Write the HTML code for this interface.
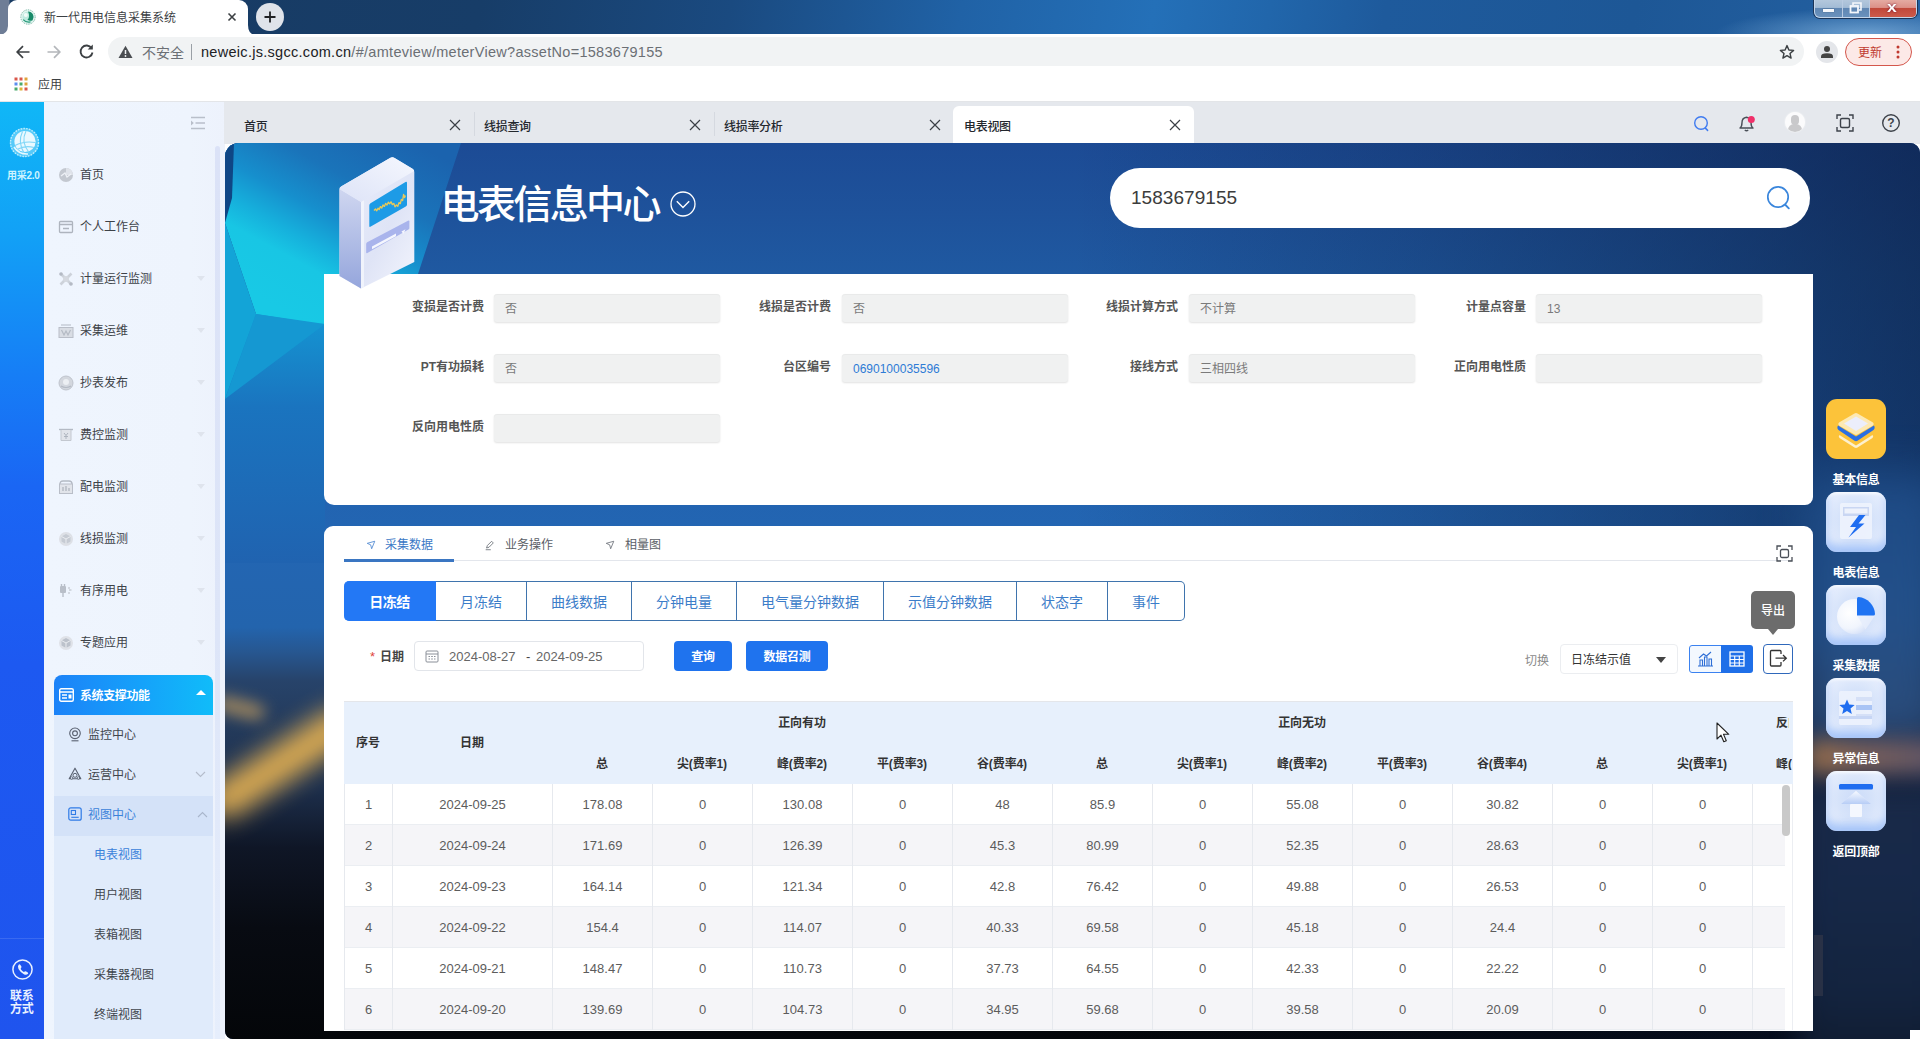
<!DOCTYPE html>
<html lang="zh-CN">
<head>
<meta charset="utf-8">
<title>新一代用电信息采集系统</title>
<style>
*{box-sizing:border-box;margin:0;padding:0}
html,body{width:1920px;height:1039px;overflow:hidden;background:#fff}
body{position:relative;font-family:"Liberation Sans","Noto Sans CJK SC",sans-serif;font-size:12px;color:#333;-webkit-font-smoothing:antialiased}
.abs{position:absolute}
.t{position:absolute;white-space:nowrap;line-height:1}
svg{position:absolute;overflow:visible}
/* browser chrome */
#tabstrip{left:0;top:0;width:1920px;height:35px;background:
 radial-gradient(ellipse 150px 26px at 1865px 34px,rgba(120,170,215,.85) 0%,rgba(120,170,215,0) 100%),
 linear-gradient(90deg,#6e7d96 0px,#6e7d96 9px,rgba(0,0,0,0) 10px),
 linear-gradient(100deg,#183a62 0%,#173d68 25%,#1a4a80 38%,#2062a6 50%,#2470b8 60%,#2166ab 66%,#1e5a9c 72%,#1d5796 85%,#2461a2 100%)}
#btab{left:8px;top:0;width:240px;height:35px;background:#fff;border-radius:9px 9px 0 0}
#toolbar{left:0;top:34px;width:1920px;height:34px;background:#fff}
#omni{left:108px;top:37px;width:1696px;height:29px;border-radius:15px;background:#f1f3f4}
#bookmarks{left:0;top:68px;width:1920px;height:34px;background:#fff;border-bottom:1px solid #e3e5e8}
</style>
</head>
<body>
<!-- ================= BROWSER CHROME ================= -->
<div class="abs" id="tabstrip"></div>
<div class="abs" id="btab"></div>
<svg style="left:0;top:25px" width="9" height="10"><path d="M0 10 Q7.5 9 8 1 L8 10 Z" fill="#fff"/></svg>
<svg style="left:248px;top:25px" width="8" height="10"><path d="M0 0 Q0 9 7 10 L0 10 Z" fill="#fff"/></svg>
<!-- favicon -->
<svg style="left:20px;top:9px" width="16" height="16" viewBox="0 0 16 16"><circle cx="8" cy="8" r="7.4" fill="#e3f5f0"/><circle cx="8" cy="8" r="7.2" fill="none" stroke="#7fb8a8" stroke-width="1" stroke-dasharray="1.3 1.1"/><circle cx="8" cy="8" r="5.6" fill="#bfeadf"/><path d="M8 2.4 A5.6 5.6 0 0 1 12.6 11.2 Q9.5 12.5 7.5 10.5 Q10.5 8 8 2.4 Z" fill="#178a68"/><path d="M3.2 10.6 Q6 13.8 10.5 12.9" stroke="#2a9b7c" stroke-width="1.3" fill="none"/><circle cx="5.8" cy="6" r="2" fill="#f2fbf8"/></svg>
<div class="t" style="left:44px;top:12px;font-size:12px;color:#3c4043;letter-spacing:0">新一代用电信息采集系统</div>
<svg style="left:227px;top:12px" width="10" height="10" viewBox="0 0 10 10"><path d="M1.5 1.5 L8.5 8.5 M8.5 1.5 L1.5 8.5" stroke="#3c4043" stroke-width="1.6"/></svg>
<div class="abs" style="left:256px;top:3px;width:28px;height:28px;border-radius:14px;background:#dfe3ea"></div>
<svg style="left:263px;top:10px" width="14" height="14" viewBox="0 0 14 14"><path d="M7 1.5 V12.5 M1.5 7 H12.5" stroke="#202124" stroke-width="1.8"/></svg>
<!-- window controls -->
<div class="abs" style="left:1814px;top:0;width:103px;height:18px;border:1px solid #c5d6ea;border-top:0;border-radius:0 0 6px 6px;box-shadow:0 0 0 1px #1b3558;background:linear-gradient(180deg,#b3c7dc 0%,#a3bcd6 44%,#5f86b2 46%,#6a92bd 100%)"></div>
<div class="abs" style="left:1842px;top:0;width:1px;height:17px;background:#b9cbe2"></div>
<div class="abs" style="left:1869px;top:0;width:1px;height:17px;background:#b9cbe2"></div>
<div class="abs" style="left:1870px;top:0;width:46px;height:17px;border-radius:0 0 4px 0;background:linear-gradient(180deg,#e4aaa2 0%,#dc9088 44%,#c0473a 47%,#cc5a4a 100%)"></div>
<div class="abs" style="left:1823px;top:9px;width:11px;height:3px;background:#f4f7fb;box-shadow:0 0 1px #234"></div>
<svg style="left:1849px;top:2px" width="13" height="12" viewBox="0 0 13 12"><path d="M4 3 V1 H12 V8 H10" fill="none" stroke="#f4f7fb" stroke-width="1.6"/><rect x="1.5" y="4" width="7.5" height="6.5" fill="none" stroke="#f4f7fb" stroke-width="1.8"/></svg>
<div class="t" style="left:1888px;top:0px;font-size:14px;font-weight:bold;color:#fff;transform:scaleX(1.25);text-shadow:0 0 2px #602">x</div>
<!-- toolbar -->
<div class="abs" id="toolbar"></div>
<svg style="left:15px;top:44px" width="16" height="16" viewBox="0 0 16 16"><path d="M14.5 8 H2.5 M8 2.2 L2.2 8 L8 13.8" fill="none" stroke="#3c4043" stroke-width="1.7"/></svg>
<svg style="left:46px;top:44px" width="16" height="16" viewBox="0 0 16 16"><path d="M1.5 8 H13.5 M8 2.2 L13.8 8 L8 13.8" fill="none" stroke="#b4b7bb" stroke-width="1.7"/></svg>
<svg style="left:78px;top:43px" width="17" height="17" viewBox="0 0 17 17"><path d="M13.6 5.2 A6 6 0 1 0 14.5 9.5" fill="none" stroke="#3c4043" stroke-width="1.8"/><path d="M14.8 1.5 V6.6 H9.7 Z" fill="#3c4043"/></svg>
<div class="abs" id="omni"></div>
<svg style="left:118px;top:45px" width="15" height="14" viewBox="0 0 15 14"><path d="M7.5 0.8 L14.5 13 H0.5 Z" fill="#4a4d51"/><path d="M7.5 5 V9" stroke="#f1f3f4" stroke-width="1.5"/><circle cx="7.5" cy="11" r=".9" fill="#f1f3f4"/></svg>
<div class="t" style="left:142px;top:46px;font-size:14px;color:#6b6f74">不安全</div>
<div class="abs" style="left:191px;top:44px;width:1px;height:16px;background:#9aa0a6"></div>
<div class="t" style="left:201px;top:45px;font-size:14.5px;color:#6b6f74;letter-spacing:.29px"><span style="color:#202124">neweic.js.sgcc.com.cn</span>/#/amteview/meterView?assetNo=1583679155</div>
<svg style="left:1779px;top:44px" width="16" height="16" viewBox="0 0 16 16"><path d="M8 1.6 L9.9 6 L14.6 6.4 L11 9.5 L12.1 14.1 L8 11.6 L3.9 14.1 L5 9.5 L1.4 6.4 L6.1 6 Z" fill="none" stroke="#3c4043" stroke-width="1.4" stroke-linejoin="round"/></svg>
<div class="abs" style="left:1816px;top:41px;width:22px;height:22px;border-radius:11px;background:#e4e6ea"></div>
<svg style="left:1820px;top:45px" width="14" height="14" viewBox="0 0 14 14"><circle cx="7" cy="4" r="3" fill="#444"/><path d="M1 13 V11.5 Q1 8.3 7 8.3 Q13 8.3 13 11.5 V13 Z" fill="#444"/></svg>
<div class="abs" style="left:1845px;top:38px;width:67px;height:28px;border-radius:14px;background:#fce9e7;border:1px solid #d4574c"></div>
<div class="t" style="left:1858px;top:47px;font-size:12px;color:#c0392f">更新</div>
<svg style="left:1896px;top:45px" width="4" height="14" viewBox="0 0 4 14"><circle cx="2" cy="2" r="1.5" fill="#c0392f"/><circle cx="2" cy="7" r="1.5" fill="#c0392f"/><circle cx="2" cy="12" r="1.5" fill="#c0392f"/></svg>
<!-- bookmarks -->
<div class="abs" id="bookmarks"></div>
<svg style="left:14px;top:77px" width="14" height="14" viewBox="0 0 14 14">
<rect x="0.5" y="0.5" width="3" height="3" fill="#d9574b"/><rect x="5.5" y="0.5" width="3" height="3" fill="#d9574b"/><rect x="10.5" y="0.5" width="3" height="3" fill="#e0a33a"/>
<rect x="0.5" y="5.5" width="3" height="3" fill="#5b8def"/><rect x="5.5" y="5.5" width="3" height="3" fill="#4aa96c"/><rect x="10.5" y="5.5" width="3" height="3" fill="#e0a33a"/>
<rect x="0.5" y="10.5" width="3" height="3" fill="#4aa96c"/><rect x="5.5" y="10.5" width="3" height="3" fill="#e0b23a"/><rect x="10.5" y="10.5" width="3" height="3" fill="#d9574b"/></svg>
<div class="t" style="left:38px;top:79px;font-size:12px;color:#3c4043">应用</div>
<!-- ================= APP LEFT STRIP ================= -->
<div class="abs" style="left:0;top:102px;width:44px;height:937px;background:linear-gradient(180deg,#10b7f7 0%,#12a1f6 14%,#167ef6 29%,#1a66f4 41%,#1d59f1 60%,#1f54ee 100%)"></div>
<svg style="left:9px;top:127px" width="31" height="31" viewBox="0 0 31 31"><circle cx="15.5" cy="15.5" r="14.6" fill="#9be3fb" opacity=".5"/><circle cx="15.5" cy="15.5" r="14" fill="none" stroke="#c9f1fd" stroke-width="1.4" stroke-dasharray="1.6 1.2" opacity=".9"/><circle cx="16" cy="14.5" r="10.6" fill="#f2fbff" opacity=".95"/><path d="M6 18.5 Q15 13.5 26.5 15.5 M8 22.5 Q16 18 25 20.5 M13.5 4.5 Q8.5 15 15 26 M17 4 Q11.5 15 20 25.5" stroke="#7fd6f7" stroke-width="1.1" fill="none"/><path d="M5 20 Q10 27.5 19 27" stroke="#e8f9ff" stroke-width="1.6" fill="none"/></svg>
<div class="t" style="left:7px;top:170.5px;font-size:10px;font-weight:bold;color:#cdf4ff;letter-spacing:-.3px">用采2.0</div>
<div class="abs" style="left:0;top:938px;width:44px;height:1px;background:rgba(255,255,255,.12)"></div>
<svg style="left:10.7px;top:957.6px" width="23" height="23" viewBox="0 0 23 23"><circle cx="11.5" cy="11.5" r="9.6" fill="none" stroke="#e9f1ff" stroke-width="1.5"/><path d="M7.6 6.8 Q8.6 5.8 9.4 6.9 L10.4 8.6 Q10.8 9.4 10 10 Q9.4 10.6 10 11.5 Q11 13 12.4 13.8 Q13.2 14.2 13.7 13.6 Q14.4 12.9 15.2 13.4 L16.8 14.5 Q17.7 15.2 16.8 16.1 Q15.4 17.4 13.2 16.4 Q9.6 14.6 7.5 10.9 Q6.4 8.4 7.6 6.8 Z" fill="#e9f1ff"/></svg>
<div class="t" style="left:10px;top:989.5px;font-size:12px;font-weight:bold;color:#e9f1ff;line-height:13.4px;letter-spacing:-.2px">联系<br>方式</div>
<!-- ================= SIDEBAR ================= -->
<div class="abs" style="left:44px;top:102px;width:181px;height:937px;background:linear-gradient(90deg,#eff5fe 0%,#eef4fd 80%,#edf2fc 100%)"></div>
<div class="abs" style="left:215px;top:146px;width:5px;height:893px;background:linear-gradient(180deg,#dbe2f7 0%,#dde5f8 55%,#e6eefc 100%);border-radius:3px 3px 0 0"></div>
<svg style="left:190px;top:116px" width="16" height="14" viewBox="0 0 16 14"><path d="M1 1.5 H15 M5.5 7 H15 M1 12.5 H15" stroke="#b9bfca" stroke-width="1.3"/><path d="M1 4.5 L3.8 7 L1 9.5 Z" fill="#b9bfca"/></svg>
<style>
.mi{position:absolute;left:80px;font-size:12px;color:#3d4248;line-height:1;white-space:nowrap}
.ma{position:absolute;left:197px;width:0;height:0;border-left:4.5px solid transparent;border-right:4.5px solid transparent;border-top:5px solid #dfe4ed}
.sm{position:absolute;font-size:12px;color:#40464d;line-height:1;white-space:nowrap}
</style>
<!-- menu icons -->
<svg style="left:58px;top:167px" width="16" height="16" viewBox="0 0 16 16"><circle cx="8" cy="8" r="7" fill="#c3c8d0"/><path d="M8 8 L8 1 A7 7 0 0 1 15 8 Z" fill="#dfe3ea"/><path d="M3 9 L7 6 L9 10 L13 7" stroke="#eef1f6" stroke-width="1.2" fill="none"/></svg>
<div class="mi" style="top:169px">首页</div>
<svg style="left:58px;top:219px" width="16" height="16" viewBox="0 0 16 16"><rect x="1.5" y="2.5" width="13" height="11" rx="1" fill="none" stroke="#aeb4be" stroke-width="1.3"/><path d="M1.5 5.5 H14.5 M5 9.5 H11" stroke="#aeb4be" stroke-width="1.3"/></svg>
<div class="mi" style="top:221px">个人工作台</div>
<svg style="left:58px;top:271px" width="16" height="16" viewBox="0 0 16 16"><path d="M2.5 2.5 L13.5 13.5 M13.5 2.5 L2.5 13.5" stroke="#cdd2da" stroke-width="2.6"/><circle cx="8" cy="8" r="3" fill="#d5d9e0"/><circle cx="3" cy="3" r="1.8" fill="#b4bac4"/><circle cx="13" cy="13" r="1.8" fill="#b4bac4"/></svg>
<div class="mi" style="top:273px">计量运行监测</div><div class="ma" style="top:276px"></div>
<svg style="left:58px;top:323px" width="16" height="16" viewBox="0 0 16 16"><rect x="1" y="4.5" width="14" height="10" fill="#d9dde4" stroke="#b9bec8" stroke-width="1"/><path d="M3 2 H13 M3.5 7 L6 12 L8 8 L10 12 L12.5 7" stroke="#b4bac4" stroke-width="1.2" fill="none"/></svg>
<div class="mi" style="top:325px">采集运维</div><div class="ma" style="top:328px"></div>
<svg style="left:58px;top:375px" width="16" height="16" viewBox="0 0 16 16"><circle cx="8" cy="8" r="7" fill="#d3d7de"/><circle cx="8" cy="8" r="7" fill="none" stroke="#bfc4cd" stroke-width="1"/><circle cx="8" cy="7" r="3" fill="#eceff3"/><path d="M3 11 Q8 14 13 11" stroke="#b4bac4" stroke-width="1.2" fill="none"/></svg>
<div class="mi" style="top:377px">抄表发布</div><div class="ma" style="top:380px"></div>
<svg style="left:58px;top:427px" width="16" height="16" viewBox="0 0 16 16"><path d="M1 2.5 H15" stroke="#b4bac4" stroke-width="1.4"/><path d="M3 3 V13.5 H13 V3" fill="#e1e4ea" stroke="#c3c8d0" stroke-width="1"/><path d="M6 6 L8 8.5 L10 6 M8 8.5 V12 M6 9.5 H10" stroke="#aeb4be" stroke-width="1" fill="none"/></svg>
<div class="mi" style="top:429px">费控监测</div><div class="ma" style="top:432px"></div>
<svg style="left:58px;top:479px" width="16" height="16" viewBox="0 0 16 16"><path d="M2 5 Q2 2 5 2 H11 Q14 2 14 5" fill="none" stroke="#b4bac4" stroke-width="1.3"/><rect x="1.5" y="5" width="13" height="9.5" fill="#e1e4ea" stroke="#b9bec8" stroke-width="1"/><path d="M5 8 V12 M8 7 V12 M11 9 V12" stroke="#aeb4be" stroke-width="1.3"/></svg>
<div class="mi" style="top:481px">配电监测</div><div class="ma" style="top:484px"></div>
<svg style="left:58px;top:531px" width="16" height="16" viewBox="0 0 16 16"><circle cx="8" cy="8" r="7" fill="#dde0e6"/><path d="M8 3 L12.5 5.5 V10.5 L8 13 L3.5 10.5 V5.5 Z" fill="#c6cbd3"/><path d="M8 8 L12.5 5.5 M8 8 V13 M8 8 L3.5 5.5" stroke="#eef0f4" stroke-width=".9"/></svg>
<div class="mi" style="top:533px">线损监测</div><div class="ma" style="top:536px"></div>
<svg style="left:58px;top:583px" width="16" height="16" viewBox="0 0 16 16"><rect x="2" y="3" width="6" height="7" rx="1" fill="#b9bfc9"/><path d="M3.5 1 V3 M6.5 1 V3 M5 10 V14" stroke="#b9bfc9" stroke-width="1.4"/><path d="M11 4 V6 M13.5 7 H11 M11 9 V11" stroke="#c9ced6" stroke-width="1.4"/></svg>
<div class="mi" style="top:585px">有序用电</div><div class="ma" style="top:588px"></div>
<svg style="left:58px;top:635px" width="16" height="16" viewBox="0 0 16 16"><circle cx="8" cy="8" r="7" fill="#dfe2e8"/><path d="M8 3 L12.5 5.5 V10.5 L8 13 L3.5 10.5 V5.5 Z" fill="#bcc2cb"/><path d="M8 8 L12.5 5.5 M8 8 V13 M8 8 L3.5 5.5" stroke="#eef0f4" stroke-width=".9"/></svg>
<div class="mi" style="top:637px">专题应用</div><div class="ma" style="top:640px"></div>
<!-- active group -->
<div class="abs" style="left:54px;top:715px;width:159px;height:324px;background:#e0ebfb"></div>
<div class="abs" style="left:54px;top:675px;width:159px;height:40px;border-radius:8px 8px 0 0;background:linear-gradient(90deg,#1c82f8 0%,#15a2fa 55%,#10bcf9 100%)"></div>
<svg style="left:59px;top:688px" width="15" height="14" viewBox="0 0 15 14"><rect x=".7" y=".7" width="13.6" height="12.6" rx="1.5" fill="none" stroke="#fff" stroke-width="1.4"/><path d="M.7 4 H14.3 M3 7 H8 M3 10 H8" stroke="#fff" stroke-width="1.4"/><rect x="9.5" y="6.5" width="3" height="4" fill="#fff"/></svg>
<div class="t" style="left:80px;top:690px;font-size:12px;font-weight:bold;color:#fff;letter-spacing:-.4px">系统支撑功能</div>
<div class="abs" style="left:196px;top:690px;width:0;height:0;border-left:5px solid transparent;border-right:5px solid transparent;border-bottom:5.5px solid #fff"></div>
<svg style="left:68px;top:727px" width="14" height="15" viewBox="0 0 14 15"><circle cx="7" cy="6.3" r="5.3" fill="none" stroke="#596170" stroke-width="1.1"/><circle cx="7" cy="6.3" r="2.4" fill="none" stroke="#596170" stroke-width="1.1"/><path d="M3.5 13.8 H10.5" stroke="#596170" stroke-width="1.1"/></svg>
<div class="sm" style="left:88px;top:729px">监控中心</div>
<svg style="left:68px;top:767px" width="14" height="14" viewBox="0 0 14 14"><path d="M7 1.2 L12.8 11.8 H1.2 Z" fill="none" stroke="#596170" stroke-width="1.1" stroke-linejoin="round"/><circle cx="7" cy="8.3" r="2" fill="none" stroke="#596170" stroke-width="1"/><circle cx="3.6" cy="11" r="1.3" fill="#e0ebfb" stroke="#596170" stroke-width=".9"/><circle cx="10.4" cy="11" r="1.3" fill="#e0ebfb" stroke="#596170" stroke-width=".9"/></svg>
<div class="sm" style="left:88px;top:769px">运营中心</div>
<svg style="left:195px;top:771px" width="11" height="7" viewBox="0 0 11 7"><path d="M1 1 L5.5 5.5 L10 1" fill="none" stroke="#b4bccb" stroke-width="1.1"/></svg>
<div class="abs" style="left:54px;top:796px;width:159px;height:40px;background:#d4e2f8"></div>
<svg style="left:68px;top:807px" width="14" height="14" viewBox="0 0 14 14"><rect x=".8" y=".8" width="12.4" height="12.4" rx="2" fill="none" stroke="#2f7be6" stroke-width="1.2"/><rect x="3.3" y="3.5" width="4.2" height="4" fill="none" stroke="#2f7be6" stroke-width="1.1"/><path d="M3.3 10.3 H10.7" stroke="#2f7be6" stroke-width="1.1"/></svg>
<div class="sm" style="left:88px;top:809px;color:#3b82da">视图中心</div>
<svg style="left:197px;top:811px" width="11" height="7" viewBox="0 0 11 7"><path d="M1 6 L5.5 1.5 L10 6" fill="none" stroke="#a9b6cc" stroke-width="1.1"/></svg>
<div class="sm" style="left:94px;top:849px;color:#3b82da">电表视图</div>
<div class="sm" style="left:94px;top:889px">用户视图</div>
<div class="sm" style="left:94px;top:929px">表箱视图</div>
<div class="sm" style="left:94px;top:969px">采集器视图</div>
<div class="sm" style="left:94px;top:1009px">终端视图</div>
<!-- ================= APP TAB BAR ================= -->
<div class="abs" style="left:224px;top:102px;width:1696px;height:42px;background:#e5e8ed"></div>
<div class="abs" style="left:953px;top:106px;width:241px;height:38px;background:#fff;border-radius:6px 6px 0 0"></div>
<style>.tb{position:absolute;top:121px;font-size:12px;font-weight:500;color:#23272d;line-height:1;white-space:nowrap;letter-spacing:-.3px}</style>
<div class="tb" style="left:244px">首页</div>
<div class="tb" style="left:484px">线损查询</div>
<div class="tb" style="left:724px">线损率分析</div>
<div class="tb" style="left:964px">电表视图</div>
<svg style="left:449px;top:119px" width="12" height="12" viewBox="0 0 12 12"><path d="M1 1 L11 11 M11 1 L1 11" stroke="#3a3f46" stroke-width="1.2"/></svg>
<svg style="left:689px;top:119px" width="12" height="12" viewBox="0 0 12 12"><path d="M1 1 L11 11 M11 1 L1 11" stroke="#3a3f46" stroke-width="1.2"/></svg>
<svg style="left:929px;top:119px" width="12" height="12" viewBox="0 0 12 12"><path d="M1 1 L11 11 M11 1 L1 11" stroke="#3a3f46" stroke-width="1.2"/></svg>
<svg style="left:1169px;top:119px" width="12" height="12" viewBox="0 0 12 12"><path d="M1 1 L11 11 M11 1 L1 11" stroke="#3a3f46" stroke-width="1.2"/></svg>
<div class="abs" style="left:474px;top:112px;width:1px;height:24px;background:#d5d9e0"></div>
<div class="abs" style="left:714px;top:112px;width:1px;height:24px;background:#d5d9e0"></div>
<!-- right icons -->
<svg style="left:1693px;top:115px" width="17" height="17" viewBox="0 0 17 17"><circle cx="8" cy="8" r="6.3" fill="none" stroke="#3f7bf0" stroke-width="1.4"/><path d="M12.6 13.4 L14.6 15.4" stroke="#3f7bf0" stroke-width="1.5" stroke-linecap="round"/></svg>
<svg style="left:1737px;top:113px" width="20" height="20" viewBox="0 0 20 20"><path d="M3 15 Q5 13.5 5 9.5 Q5 4.8 9.5 4.2 Q14 4.8 14 9.5 Q14 13.5 16 15 Z" fill="none" stroke="#4a4f57" stroke-width="1.4" stroke-linejoin="round"/><path d="M7.8 17 Q9.5 18.6 11.2 17" fill="none" stroke="#4a4f57" stroke-width="1.4"/><circle cx="14.3" cy="6.6" r="3.5" fill="#f0306a"/></svg>
<div class="abs" style="left:1785px;top:112px;width:20px;height:20px;border-radius:10px;background:#fbfbfc;overflow:hidden;box-shadow:0 0 2px rgba(255,255,255,.9)"><div class="abs" style="left:6px;top:2.5px;width:8px;height:10px;border-radius:4px;background:#c9c9cb"></div><div class="abs" style="left:3px;top:12px;width:14px;height:12px;border-radius:6px 6px 0 0;background:#c9c9cb"></div></div>
<svg style="left:1836px;top:114px" width="18" height="18" viewBox="0 0 18 18"><path d="M1 5 V1 H5 M13 1 H17 V5 M17 13 V17 H13 M5 17 H1 V13" fill="none" stroke="#3d424a" stroke-width="1.4"/><rect x="4.5" y="4.5" width="9" height="9" rx="1.5" fill="none" stroke="#3d424a" stroke-width="1.4"/></svg>
<svg style="left:1881px;top:113px" width="20" height="20" viewBox="0 0 20 20"><circle cx="10" cy="10" r="8.3" fill="none" stroke="#3d424a" stroke-width="1.4"/><text x="10" y="14.2" text-anchor="middle" font-family="Liberation Sans,sans-serif" font-weight="bold" font-size="12" fill="#3d424a">?</text></svg>
<!-- ================= MAIN BACKGROUND ================= -->
<div class="abs" id="main" style="left:225px;top:143px;width:1695px;height:896px;border-radius:14px 10px 0 8px;overflow:hidden;background:#17366a">
 <div class="abs" style="left:0;top:0;width:1695px;height:896px;background:
  linear-gradient(90deg,rgba(8,20,50,0) 0%,rgba(8,20,50,0) 50%,rgba(8,20,50,.2) 70%,rgba(8,20,50,.42) 88%,rgba(8,20,50,.58) 100%),
  linear-gradient(180deg,#1c4b95 0px,#1e529b 70px,#1f59a1 130px,#2161ae 300px,#2366b3 400px,#2364ad 484px,#27568f 510px,#27436a 538px,#243b5c 580px,#1d2f4c 645px,#0f1626 705px,#080b12 785px,#040609 896px)"></div>
 <!-- left teal polygons -->
 <svg style="left:0;top:0" width="330" height="520" viewBox="0 0 330 520">
  <defs>
   <linearGradient id="gTop" gradientUnits="userSpaceOnUse" x1="190" y1="0" x2="90" y2="185"><stop offset="0" stop-color="#1b63ae"/><stop offset=".3" stop-color="#1a74ba"/><stop offset=".5" stop-color="#168fcd"/><stop offset=".65" stop-color="#16b0dc"/><stop offset=".76" stop-color="#18c6e4"/><stop offset="1" stop-color="#18c9e5"/></linearGradient>
   <linearGradient id="gLow" gradientUnits="userSpaceOnUse" x1="0" y1="180" x2="0" y2="420"><stop offset="0" stop-color="#1593d1"/><stop offset=".35" stop-color="#1a74bf"/><stop offset="1" stop-color="#2063b0"/></linearGradient>
  </defs>
  <polygon points="0,170 100,170 100,420 0,420" fill="url(#gLow)"/>
  <polygon points="0,0 236,0 193,131 100,131 100,182 31,171 0,80" fill="url(#gTop)"/>
  <polygon points="0,80 31,171 0,256" fill="#13a4d7"/>
  <polygon points="31,171 100,181 0,256" fill="#1598d2"/>
  <polygon points="0,0 9,0 7,55 0,80" fill="#0f4685"/>
 </svg>
 <!-- night lights lower-left -->
 <div class="abs" style="left:-28px;top:601px;width:170px;height:38px;background:#e0ae52;filter:blur(12px);opacity:.95;transform:rotate(-33deg);border-radius:20px"></div>
 <div class="abs" style="left:-10px;top:558px;width:50px;height:14px;background:#cfa35e;filter:blur(8px);opacity:.8;transform:rotate(14deg);border-radius:10px"></div>
 <!-- right sunset glow -->
 <div class="abs" style="left:1580px;top:330px;width:140px;height:270px;background:linear-gradient(180deg,#1e4b86 0%,#24528c 50%,#2d4d7a 100%);filter:blur(22px);opacity:.95"></div>
 <div class="abs" style="left:1575px;top:645px;width:150px;height:280px;background:linear-gradient(180deg,#1a2a48 0%,#17294a 35%,#14243f 75%,#101b2e 100%);filter:blur(14px);opacity:.97"></div>
 <div class="abs" style="left:1582px;top:597px;width:135px;height:34px;background:linear-gradient(90deg,#a87648 0%,#86665a 35%,#66596a 100%);filter:blur(11px);opacity:.95"></div>
</div>
<!-- ================= HEADER ================= -->
<div class="t" style="left:440.5px;top:185px;font-size:39px;font-weight:500;color:#fff;letter-spacing:-2.6px">电表信息中心</div>
<svg style="left:669.6px;top:191.3px" width="26" height="26" viewBox="0 0 26 26"><circle cx="13" cy="13" r="12" fill="none" stroke="#fff" stroke-width="1.3"/><path d="M6.8 10.2 L13 16.4 L19.2 10.2" fill="none" stroke="#fff" stroke-width="1.4"/></svg>
<div class="abs" style="left:1110px;top:168px;width:700px;height:60px;border-radius:30px;background:#fff"></div>
<div class="t" style="left:1131px;top:188px;font-size:19px;color:#3c3c3c;letter-spacing:.05px">1583679155</div>
<svg style="left:1765px;top:184px" width="28" height="28" viewBox="0 0 28 28"><circle cx="13" cy="13" r="10.2" fill="none" stroke="#3a86dc" stroke-width="1.7"/><path d="M20.5 21 L23.8 24.3" stroke="#3a86dc" stroke-width="1.9" stroke-linecap="round"/></svg>
<!-- ================= INFO CARD ================= -->
<div class="abs" style="left:324px;top:274px;width:1489px;height:231px;background:#fff;border-radius:0 0 8px 10px"></div>
<style>
.fl{position:absolute;font-size:12px;font-weight:bold;color:#555;line-height:1;white-space:nowrap;text-align:right;width:160px;letter-spacing:0}
.fi{position:absolute;width:226px;height:28px;background:#f0f1f1;border-radius:3px;box-shadow:0 1px 2px rgba(0,0,0,.12), inset 0 1px 1px rgba(0,0,0,.03);font-size:12px;color:#7a7a7a;line-height:30px;padding-left:11px;white-space:nowrap}
</style>
<div class="fl" style="left:324px;top:301px">变损是否计费</div><div class="fi" style="left:494px;top:294px">否</div>
<div class="fl" style="left:671px;top:301px">线损是否计费</div><div class="fi" style="left:842px;top:294px">否</div>
<div class="fl" style="left:1018px;top:301px">线损计算方式</div><div class="fi" style="left:1189px;top:294px">不计算</div>
<div class="fl" style="left:1366px;top:301px">计量点容量</div><div class="fi" style="left:1536px;top:294px">13</div>
<div class="fl" style="left:324px;top:361px">PT有功损耗</div><div class="fi" style="left:494px;top:354px">否</div>
<div class="fl" style="left:671px;top:361px">台区编号</div><div class="fi" style="left:842px;top:354px;color:#2e7bd6">0690100035596</div>
<div class="fl" style="left:1018px;top:361px">接线方式</div><div class="fi" style="left:1189px;top:354px">三相四线</div>
<div class="fl" style="left:1366px;top:361px">正向用电性质</div><div class="fi" style="left:1536px;top:354px"></div>
<div class="fl" style="left:324px;top:421px">反向用电性质</div><div class="fi" style="left:494px;top:414px"></div>
<!-- meter illustration -->
<svg style="left:330px;top:150px" width="100" height="150" viewBox="330 150 100 150">
 <defs>
  <linearGradient id="mF" x1="0" y1="0" x2="1" y2="1"><stop offset="0" stop-color="#e9edfb"/><stop offset=".6" stop-color="#dfe4f6"/><stop offset="1" stop-color="#f3f5fd"/></linearGradient>
  <linearGradient id="mL" x1="0" y1="0" x2="0" y2="1"><stop offset="0" stop-color="#cfd6f0"/><stop offset="1" stop-color="#95a6dc"/></linearGradient>
  <linearGradient id="mT" x1="0" y1="1" x2="1" y2="0"><stop offset="0" stop-color="#dde3f7"/><stop offset="1" stop-color="#f5f7fe"/></linearGradient>
 </defs>
 <path d="M339.5 190 Q339.3 187.5 341.5 186.3 L390 158 Q392.4 156.7 394.6 158 L412.5 168.8 Q414.3 170 414.3 172 L414.3 262 L361 288.5 L339.5 276 Z" fill="url(#mF)"/>
 <path d="M339.5 189 L361 202 L361 288.5 L339.5 276 Z" fill="url(#mL)"/>
 <path d="M339.5 189 Q339.3 187.3 341.5 186.3 L390 158 Q392.4 156.7 394.6 158 L412.5 168.8 Q414 169.8 414.2 171 L361 202 Z" fill="url(#mT)"/>
 <path d="M361 202 L364 200.3 L364 287 L361 288.5 Z" fill="#f4f6fd" opacity=".8"/>
 <path d="M369.3 205.5 Q369.3 204 370.5 203.3 L405.5 182 Q407 181.2 407 183 L407 204.5 Q407 205.8 405.8 206.5 L370.8 226.6 Q369.3 227.4 369.3 226 Z" fill="#1d9be6"/>
 <path d="M374 210.5 L375.5 209 L376.8 210.8 L378 208.2 L379.2 209.6 L380.4 206.6 L381.8 208 L383 205 L384.4 206.4 L385.6 203.4 L387 205 L388.3 202.2 L389.6 203.8 L391 201.8 L392.4 204.6 L393.8 203.4 L395 206.8 L396.4 205 L397.8 206.2 L399 202.6 L400.3 203.6 L401.4 199.4 L402.6 200.6 L403.6 194.4 L404.6 197.6 L405.4 195.6" fill="none" stroke="#e8c95a" stroke-width="1.35" stroke-linejoin="round"/>
 <path d="M366.2 244 Q366.2 242.8 367.2 242.2 L408 220.8 Q409.4 220.2 409.4 221.5 L409.4 228 Q409.4 229 408.4 229.6 L367.4 253 Q366.2 253.6 366.2 252.4 Z" fill="#a9b4ec"/>
 <path d="M372 246.5 L396 233.5 L396 236.2 L372 249.2 Z" fill="#f4f6fe"/>
 <path d="M401.5 231.5 L405.5 229.3 L403.5 234 Z" fill="#f4f6fe"/>
</svg>
<!-- ================= DATA CARD ================= -->
<div class="abs" style="left:324px;top:526px;width:1489px;height:505px;background:#fff;border-radius:9px 9px 0 0"></div>
<div class="abs" style="left:344px;top:559.7px;width:1449px;height:1.6px;background:#e3e6ec"></div>
<div class="abs" style="left:344px;top:559.4px;width:110px;height:2.6px;background:#3a76c2"></div>
<svg style="left:365.5px;top:540px" width="10" height="10" viewBox="0 0 12 12"><path d="M1.5 4 L10.5 1.5 L6.8 10.5 L5.6 5.8 Z" fill="none" stroke="#4b86d0" stroke-width="1" stroke-linejoin="round"/></svg>
<div class="t" style="left:385px;top:539px;font-size:12px;color:#3a78c6">采集数据</div>
<svg style="left:484px;top:539.5px" width="11" height="11" viewBox="0 0 13 13"><path d="M3 9.5 L4 6.5 L9 1.5 L11 3.5 L6 8.5 Z M2 11.5 H8" fill="none" stroke="#6a6f77" stroke-width="1" stroke-linejoin="round"/></svg>
<div class="t" style="left:505px;top:539px;font-size:12px;color:#5a5e66">业务操作</div>
<svg style="left:604.5px;top:540px" width="10" height="10" viewBox="0 0 12 12"><path d="M1.5 4 L10.5 1.5 L6.8 10.5 L5.6 5.8 Z" fill="none" stroke="#6a6f77" stroke-width="1" stroke-linejoin="round"/></svg>
<div class="t" style="left:625px;top:539px;font-size:12px;color:#5a5e66">相量图</div>
<svg style="left:1776px;top:545px" width="17" height="17" viewBox="0 0 17 17"><path d="M1 5 V1 H5 M12 1 H16 V5 M16 12 V16 H12 M5 16 H1 V12" fill="none" stroke="#4a4f57" stroke-width="1.3"/><rect x="4.5" y="4.5" width="8" height="8" rx="1.5" fill="none" stroke="#4a4f57" stroke-width="1.3"/></svg>
<!-- button group -->
<style>.bg{position:absolute;top:581px;height:40px;border:1px solid #3f74ad;border-left:0;background:#fff;font-size:14px;color:#3c7dc9;text-align:center;line-height:40px;white-space:nowrap}</style>
<div class="bg" style="left:344px;width:92px;background:#2378f5;border-color:#2378f5;color:#fff;font-weight:bold;border-radius:5px 0 0 5px;letter-spacing:-.5px">日冻结</div>
<div class="bg" style="left:436px;width:91px">月冻结</div>
<div class="bg" style="left:527px;width:105px">曲线数据</div>
<div class="bg" style="left:632px;width:105px">分钟电量</div>
<div class="bg" style="left:737px;width:147px">电气量分钟数据</div>
<div class="bg" style="left:884px;width:133px">示值分钟数据</div>
<div class="bg" style="left:1017px;width:91px">状态字</div>
<div class="bg" style="left:1108px;width:77px;border-radius:0 5px 5px 0">事件</div>
<!-- date row -->
<div class="t" style="left:370px;top:650px;font-size:13px;color:#e0453a">*</div>
<div class="t" style="left:380px;top:651px;font-size:12px;font-weight:bold;color:#444">日期</div>
<div class="abs" style="left:414px;top:641px;width:230px;height:30px;border:1px solid #e2e5ea;border-radius:4px;background:#fff"></div>
<svg style="left:425px;top:649px" width="14" height="14" viewBox="0 0 14 14"><rect x="1" y="2" width="12" height="11" rx="1" fill="none" stroke="#8a8f98" stroke-width="1"/><path d="M1 5 H13 M3.5 7.5 H5 M6.2 7.5 H7.8 M9 7.5 H10.5 M3.5 10 H5 M6.2 10 H7.8 M9 10 H10.5" stroke="#8a8f98" stroke-width="1"/></svg>
<div class="t" style="left:449px;top:650px;font-size:13px;color:#666">2024-08-27</div>
<div class="t" style="left:526px;top:650px;font-size:13px;color:#444">-</div>
<div class="t" style="left:536px;top:650px;font-size:13px;color:#666">2024-09-25</div>
<div class="abs" style="left:674px;top:641px;width:58px;height:30px;border-radius:4px;background:#1f73ee;color:#fff;font-size:12px;font-weight:bold;text-align:center;line-height:32px;letter-spacing:-.3px">查询</div>
<div class="abs" style="left:746px;top:641px;width:82px;height:30px;border-radius:4px;background:#1f73ee;color:#fff;font-size:12px;font-weight:bold;text-align:center;line-height:32px;letter-spacing:-.3px">数据召测</div>
<!-- right controls -->
<div class="t" style="left:1525px;top:655px;font-size:12px;color:#8a8a8a">切换</div>
<div class="abs" style="left:1560px;top:644px;width:118px;height:30px;border:1px solid #ebedf0;border-radius:4px;background:#fff"></div>
<div class="t" style="left:1571px;top:654px;font-size:12px;color:#333">日冻结示值</div>
<div class="abs" style="left:1656px;top:657px;width:0;height:0;border-left:5px solid transparent;border-right:5px solid transparent;border-top:6px solid #444"></div>
<div class="abs" style="left:1689px;top:645px;width:33px;height:28px;border:1px solid #3b82f0;border-radius:3px 0 0 3px;background:#f3f8fe"></div>
<div class="abs" style="left:1721px;top:645px;width:32px;height:28px;border-radius:0 3px 3px 0;background:#1f6fe8"></div>
<svg style="left:1697px;top:651px" width="17" height="16" viewBox="0 0 17 16"><path d="M1 15 H16 M3 15 V9 H5.5 V15 M7.5 15 V6 H10 V15 M12 15 V8 H14.5 V15" fill="none" stroke="#2f6fd6" stroke-width="1.1"/><path d="M2 7 L6.5 3 L9.5 5 L14 1" fill="none" stroke="#2f6fd6" stroke-width="1.1"/></svg>
<svg style="left:1729px;top:651px" width="16" height="16" viewBox="0 0 16 16"><rect x="1" y="1" width="14" height="14" fill="none" stroke="#fff" stroke-width="1.3"/><path d="M1 5 H15 M1 8.5 H15 M1 12 H15 M5.7 5 V15 M10.3 5 V15" stroke="#fff" stroke-width="1.1"/></svg>
<div class="abs" style="left:1763px;top:644px;width:30px;height:30px;border:1px solid #2f68bb;border-radius:4px;background:#fff"></div>
<svg style="left:1769px;top:649px" width="19" height="19" viewBox="0 0 19 19"><path d="M12 5 V2.5 Q12 1.5 11 1.5 H2.5 Q1.5 1.5 1.5 2.5 V16 Q1.5 17 2.5 17 H11 Q12 17 12 16 V13" fill="none" stroke="#333" stroke-width="1.3"/><path d="M6.5 9.2 H17 M14 6 L17.3 9.2 L14 12.4" fill="none" stroke="#333" stroke-width="1.3"/></svg>
<div class="abs" style="left:1751px;top:591px;width:44px;height:38px;border-radius:5px;background:#6c6c6c;color:#fff;font-size:12px;text-align:center;line-height:40px;font-weight:500">导出</div>
<div class="abs" style="left:1768px;top:629px;width:0;height:0;border-left:5.5px solid transparent;border-right:5.5px solid transparent;border-top:6px solid #6c6c6c"></div>
<!-- ================= TABLE ================= -->
<style>.tr{position:absolute;left:344px;width:1441px;height:41px;border-bottom:1px solid #ebeef2}.td{position:absolute;top:0;height:41px;border-left:1px solid #e6e9ee;text-align:center;font-size:13px;color:#5c5c5c;line-height:42px;white-space:nowrap}.th{position:absolute;font-size:12px;font-weight:bold;color:#333;line-height:1;white-space:nowrap;text-align:center;width:100px;letter-spacing:-.1px}</style>
<div class="abs" style="left:344px;top:701px;width:1449px;height:83px;background:#e7f0fc;border-top:1px solid #e4e6ea"></div>
<div class="abs" style="left:1785px;top:784px;width:8px;height:246px;background:#fff;border-right:1px solid #eceef2"></div>
<div class="th" style="left:318px;top:737px">序号</div>
<div class="th" style="left:422px;top:737px">日期</div>
<div class="th" style="left:752px;top:717px">正向有功</div>
<div class="th" style="left:1252px;top:717px">正向无功</div>
<div class="th" style="left:1776px;top:717px;width:13px;overflow:hidden;text-align:left">反向有功</div>
<div class="th" style="left:552px;top:758px">总</div>
<div class="th" style="left:652px;top:758px">尖(费率1)</div>
<div class="th" style="left:752px;top:758px">峰(费率2)</div>
<div class="th" style="left:852px;top:758px">平(费率3)</div>
<div class="th" style="left:952px;top:758px">谷(费率4)</div>
<div class="th" style="left:1052px;top:758px">总</div>
<div class="th" style="left:1152px;top:758px">尖(费率1)</div>
<div class="th" style="left:1252px;top:758px">峰(费率2)</div>
<div class="th" style="left:1352px;top:758px">平(费率3)</div>
<div class="th" style="left:1452px;top:758px">谷(费率4)</div>
<div class="th" style="left:1552px;top:758px">总</div>
<div class="th" style="left:1652px;top:758px">尖(费率1)</div>
<div class="th" style="left:1776px;top:758px;width:16px;overflow:hidden;text-align:left">峰(费率2)</div>
<div class="tr" style="top:784px;background:#fff">
<div class="td" style="left:0px;width:48px">1</div><div class="td" style="left:48px;width:160px">2024-09-25</div><div class="td" style="left:208px;width:100px">178.08</div><div class="td" style="left:308px;width:100px">0</div><div class="td" style="left:408px;width:100px">130.08</div><div class="td" style="left:508px;width:100px">0</div><div class="td" style="left:608px;width:100px">48</div><div class="td" style="left:708px;width:100px">85.9</div><div class="td" style="left:808px;width:100px">0</div><div class="td" style="left:908px;width:100px">55.08</div><div class="td" style="left:1008px;width:100px">0</div><div class="td" style="left:1108px;width:100px">30.82</div><div class="td" style="left:1208px;width:100px">0</div><div class="td" style="left:1308px;width:100px">0</div><div class="td" style="left:1408px;width:33px"></div>
</div>
<div class="tr" style="top:825px;background:#f5f5f8">
<div class="td" style="left:0px;width:48px">2</div><div class="td" style="left:48px;width:160px">2024-09-24</div><div class="td" style="left:208px;width:100px">171.69</div><div class="td" style="left:308px;width:100px">0</div><div class="td" style="left:408px;width:100px">126.39</div><div class="td" style="left:508px;width:100px">0</div><div class="td" style="left:608px;width:100px">45.3</div><div class="td" style="left:708px;width:100px">80.99</div><div class="td" style="left:808px;width:100px">0</div><div class="td" style="left:908px;width:100px">52.35</div><div class="td" style="left:1008px;width:100px">0</div><div class="td" style="left:1108px;width:100px">28.63</div><div class="td" style="left:1208px;width:100px">0</div><div class="td" style="left:1308px;width:100px">0</div><div class="td" style="left:1408px;width:33px"></div>
</div>
<div class="tr" style="top:866px;background:#fff">
<div class="td" style="left:0px;width:48px">3</div><div class="td" style="left:48px;width:160px">2024-09-23</div><div class="td" style="left:208px;width:100px">164.14</div><div class="td" style="left:308px;width:100px">0</div><div class="td" style="left:408px;width:100px">121.34</div><div class="td" style="left:508px;width:100px">0</div><div class="td" style="left:608px;width:100px">42.8</div><div class="td" style="left:708px;width:100px">76.42</div><div class="td" style="left:808px;width:100px">0</div><div class="td" style="left:908px;width:100px">49.88</div><div class="td" style="left:1008px;width:100px">0</div><div class="td" style="left:1108px;width:100px">26.53</div><div class="td" style="left:1208px;width:100px">0</div><div class="td" style="left:1308px;width:100px">0</div><div class="td" style="left:1408px;width:33px"></div>
</div>
<div class="tr" style="top:907px;background:#f5f5f8">
<div class="td" style="left:0px;width:48px">4</div><div class="td" style="left:48px;width:160px">2024-09-22</div><div class="td" style="left:208px;width:100px">154.4</div><div class="td" style="left:308px;width:100px">0</div><div class="td" style="left:408px;width:100px">114.07</div><div class="td" style="left:508px;width:100px">0</div><div class="td" style="left:608px;width:100px">40.33</div><div class="td" style="left:708px;width:100px">69.58</div><div class="td" style="left:808px;width:100px">0</div><div class="td" style="left:908px;width:100px">45.18</div><div class="td" style="left:1008px;width:100px">0</div><div class="td" style="left:1108px;width:100px">24.4</div><div class="td" style="left:1208px;width:100px">0</div><div class="td" style="left:1308px;width:100px">0</div><div class="td" style="left:1408px;width:33px"></div>
</div>
<div class="tr" style="top:948px;background:#fff">
<div class="td" style="left:0px;width:48px">5</div><div class="td" style="left:48px;width:160px">2024-09-21</div><div class="td" style="left:208px;width:100px">148.47</div><div class="td" style="left:308px;width:100px">0</div><div class="td" style="left:408px;width:100px">110.73</div><div class="td" style="left:508px;width:100px">0</div><div class="td" style="left:608px;width:100px">37.73</div><div class="td" style="left:708px;width:100px">64.55</div><div class="td" style="left:808px;width:100px">0</div><div class="td" style="left:908px;width:100px">42.33</div><div class="td" style="left:1008px;width:100px">0</div><div class="td" style="left:1108px;width:100px">22.22</div><div class="td" style="left:1208px;width:100px">0</div><div class="td" style="left:1308px;width:100px">0</div><div class="td" style="left:1408px;width:33px"></div>
</div>
<div class="tr" style="top:989px;background:#f5f5f8">
<div class="td" style="left:0px;width:48px">6</div><div class="td" style="left:48px;width:160px">2024-09-20</div><div class="td" style="left:208px;width:100px">139.69</div><div class="td" style="left:308px;width:100px">0</div><div class="td" style="left:408px;width:100px">104.73</div><div class="td" style="left:508px;width:100px">0</div><div class="td" style="left:608px;width:100px">34.95</div><div class="td" style="left:708px;width:100px">59.68</div><div class="td" style="left:808px;width:100px">0</div><div class="td" style="left:908px;width:100px">39.58</div><div class="td" style="left:1008px;width:100px">0</div><div class="td" style="left:1108px;width:100px">20.09</div><div class="td" style="left:1208px;width:100px">0</div><div class="td" style="left:1308px;width:100px">0</div><div class="td" style="left:1408px;width:33px"></div>
</div>
<div class="abs" style="left:1782px;top:785px;width:8px;height:51px;border-radius:4px;background:#c9c9c9"></div>
<!-- ================= RIGHT FLOAT ICONS ================= -->
<style>
.fb{position:absolute;left:1826px;width:60px;height:60px;border-radius:11px;background:radial-gradient(ellipse at 50% 48%,#cbdbf9 0%,#d6e3fa 40%,#e6eefd 78%,#eef3fe 100%);box-shadow:inset 0 -7px 9px rgba(140,180,246,.7), inset 0 2px 3px rgba(255,255,255,.85)}
.fx{position:absolute;left:1816px;width:80px;text-align:center;font-size:12px;font-weight:bold;color:#fff;line-height:1;white-space:nowrap;letter-spacing:-.3px}
</style>
<div class="abs" style="left:1826px;top:399px;width:60px;height:60px;border-radius:11px;background:#fcc33a"></div>
<svg style="left:1826px;top:399px" width="60" height="60" viewBox="0 0 60 60">
 <path d="M13.5 36 L30 46.5 L46.5 36 Q48 37.5 46.5 39 L31.5 48.6 Q30 49.4 28.5 48.6 L13.5 39 Q12 37.5 13.5 36 Z" fill="#fdf0cd"/>
 <path d="M12 26.5 L30 37.5 L48 26.5 Q49.5 29 47.5 31 L31.5 41.8 Q30 42.6 28.5 41.8 L12.5 31 Q10.5 29 12 26.5 Z" fill="#2a6fe2"/>
 <path d="M28.5 14.4 Q30 13.6 31.5 14.4 L47 23.6 Q48.6 25 47 26.4 L31.5 35.6 Q30 36.4 28.5 35.6 L13 26.4 Q11.4 25 13 23.6 Z" fill="#fde9b4"/>
 <path d="M30 17.5 L42 24.5 L30 32 L18 24.5 Z" fill="#eceefb"/>
</svg>
<div class="fx" style="top:474px">基本信息</div>
<div class="fb" style="top:492px"></div>
<svg style="left:1826px;top:492px" width="60" height="60" viewBox="0 0 60 60">
 <rect x="14" y="11" width="32" height="36" rx="2" fill="#eef3fd" opacity=".9"/>
 <rect x="17" y="15" width="26" height="9" fill="#c9d6f3"/>
 <rect x="18.5" y="16.5" width="23" height="5" fill="#eef2fc"/>
 <path d="M33 23 L24 35 H30 L22.5 45.5 L38.5 31.5 H32.5 L39.5 23 Z" fill="#1f6df0"/>
</svg>
<div class="fx" style="top:567px">电表信息</div>
<div class="fb" style="top:585px"></div>
<svg style="left:1826px;top:585px" width="60" height="60" viewBox="0 0 60 60">
 <defs><radialGradient id="pieG" cx=".35" cy=".4" r=".8"><stop offset="0" stop-color="#fff"/><stop offset=".55" stop-color="#f1f5fd"/><stop offset="1" stop-color="#c6d6f6"/></radialGradient></defs>
 <circle cx="28.5" cy="31.5" r="17.5" fill="url(#pieG)"/>
 <path d="M31 30.6 H49 L39.5 44.5 Z" fill="#e6edfc" opacity=".85"/>
 <path d="M31 30.6 V13.5 Q31 12 32.5 12 A18 18 0 0 1 49 29 Q49 30.6 47.5 30.6 Z" fill="#1f73f2"/>
</svg>
<div class="fx" style="top:660px">采集数据</div>
<div class="fb" style="top:678px"></div>
<svg style="left:1826px;top:678px" width="60" height="60" viewBox="0 0 60 60">
 <rect x="13" y="13" width="33" height="34" rx="2" fill="#eef3fd" opacity=".85"/>
 <rect x="30" y="19" width="16" height="4" fill="#d5e0f7"/><rect x="30" y="27" width="16" height="5" fill="#a9c4f5"/><rect x="30" y="36" width="16" height="4" fill="#d5e0f7"/>
 <rect x="13" y="38" width="33" height="3" fill="#c7d6f5"/>
 <path d="M21 21.5 L23.2 26.6 L28.7 27 L24.5 30.6 L25.8 36 L21 33.1 L16.2 36 L17.5 30.6 L13.3 27 L18.8 26.6 Z" fill="#1f6df0"/>
</svg>
<div class="fx" style="top:753px">异常信息</div>
<div class="fb" style="top:771px"></div>
<svg style="left:1826px;top:771px" width="60" height="60" viewBox="0 0 60 60">
 <rect x="13" y="13" width="34" height="5.5" rx="1.5" fill="#1f6df0"/>
 <path d="M30 20 L45 33 H15 Z" fill="#e3ebfb"/>
 <path d="M30 20 L45 33 H15 Z" fill="url(#arG)"/>
 <rect x="24" y="33" width="12" height="13" rx="1" fill="#f4f7fe"/>
 <defs><linearGradient id="arG" x1="0" y1="0" x2="0" y2="1"><stop offset="0" stop-color="#f6f9ff"/><stop offset="1" stop-color="#b7cdf6"/></linearGradient></defs>
</svg>
<div class="fx" style="top:846px">返回顶部</div>
<!-- mouse cursor -->
<svg style="left:1716px;top:722px" width="14" height="22" viewBox="0 0 14 22"><path d="M1 1 V17 L5 13.2 L7.8 19.8 L10.3 18.7 L7.5 12.3 H12.8 Z" fill="#fff" stroke="#222" stroke-width="1.1" stroke-linejoin="round"/></svg>
<!-- capture glitches bottom right -->
<div class="abs" style="left:1814px;top:935px;width:9px;height:61px;background:#2e3447;opacity:.8"></div>
<div class="abs" style="left:1910px;top:1030px;width:10px;height:9px;background:#fff"></div>
</body>
</html>
